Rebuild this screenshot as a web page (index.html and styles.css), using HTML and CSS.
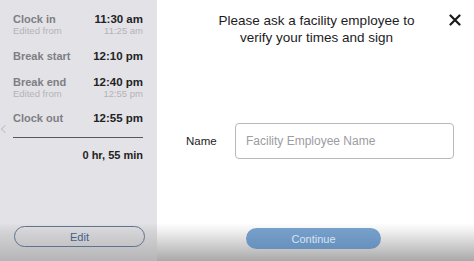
FILE: index.html
```html
<!DOCTYPE html>
<html>
<head>
<meta charset="utf-8">
<link rel="stylesheet" href="styles.css">
</head>
<body>
<div class="app">
  <aside class="side">
    <div class="side-body">
      <div class="entry">
        <div class="row"><span class="label">Clock in</span><span class="time">11:30 am</span></div>
        <div class="row sub"><span>Edited from</span><span>11:25 am</span></div>
      </div>
      <div class="entry">
        <div class="row"><span class="label">Break start</span><span class="time">12:10 pm</span></div>
      </div>
      <div class="entry">
        <div class="row"><span class="label">Break end</span><span class="time">12:40 pm</span></div>
        <div class="row sub"><span>Edited from</span><span>12:55 pm</span></div>
      </div>
      <div class="entry">
        <div class="row"><span class="label">Clock out</span><span class="time">12:55 pm</span></div>
      </div>
      <div class="rule"></div>
      <div class="total">0 hr, 55 min</div>
      <span class="chev"></span>
    </div>
    <div class="foot">
      <button class="edit">Edit</button>
    </div>
  </aside>
  <main class="main">
    <div class="main-body">
      <header class="head">
        <h1 class="title">Please ask a facility employee to<br>verify your times and sign</h1>
        <span class="close">
          <svg width="12" height="12" viewBox="0 0 12 12"><path d="M1.5 1.5L10.5 10.5M10.5 1.5L1.5 10.5" stroke="#1a1a1a" stroke-width="2.2" stroke-linecap="round"/></svg>
        </span>
      </header>
      <div class="field">
        <label class="name-label">Name</label>
        <div class="input">Facility Employee Name</div>
      </div>
    </div>
    <div class="foot foot-main">
      <button class="continue">Continue</button>
    </div>
  </main>
</div>
</body>
</html>
```
FILE: styles.css
```css
* { box-sizing: border-box; }
html, body { margin: 0; padding: 0; }
body {
  width: 474px;
  height: 261px;
  overflow: hidden;
  font-family: "Liberation Sans", Arial, sans-serif;
  background: #fff;
}
.app {
  display: grid;
  grid-template-columns: 157px 1fr;
  height: 261px;
}
.side {
  background: #e3e2e6;
  display: flex;
  flex-direction: column;
}
.side-body {
  flex: 1;
  padding: 12px 14px 0 13px;
  position: relative;
}
.entry + .entry {
  margin-top: 12px;
}
.entry:nth-child(2) { margin-top: 13px; }
.row {
  display: flex;
  justify-content: space-between;
  align-items: baseline;
  line-height: 14px;
}
.label {
  font-size: 11px;
  font-weight: bold;
  color: #7f7e84;
}
.time {
  font-size: 11.5px;
  font-weight: bold;
  color: #222224;
}
.sub {
  font-size: 9.5px;
  color: #b4b3b8;
  line-height: 11px;
  margin-top: -1px;
}
.rule {
  height: 1px;
  background: #58575c;
  margin-top: 12px;
}
.total {
  text-align: right;
  font-size: 11px;
  font-weight: bold;
  line-height: 14px;
  color: #1f1f21;
  margin-top: 10px;
}
.chev {
  position: absolute;
  left: 2px;
  top: 126px;
  width: 6px;
  height: 6px;
  border-left: 1px solid #c4c3c8;
  border-bottom: 1px solid #c4c3c8;
  transform: rotate(45deg);
}
.foot {
  height: 38px;
  display: flex;
  align-items: flex-start;
  background: linear-gradient(#e3e2e6 0px, #d4d3d6 8px, #b5b4b7 100%);
  padding-top: 3px;
}
.foot-main {
  background: linear-gradient(#ffffff 0px, #f0f0f0 8px, #a9a9a9 100%);
  justify-content: center;
  padding-top: 5px;
  padding-right: 4px;
}
.edit {
  margin-left: 14px;
  width: 131px;
  height: 21px;
  border: 1px solid #5d7391;
  border-radius: 11px;
  background: transparent;
  color: #3f5f8e;
  font-family: inherit;
  font-size: 11px;
  padding: 0;
}
.continue {
  width: 135px;
  height: 21px;
  border: none;
  border-radius: 11px;
  background: linear-gradient(#77a0cb, #6790bd);
  color: #d6e4f2;
  font-family: inherit;
  font-size: 11px;
  padding: 0;
}
.main {
  display: flex;
  flex-direction: column;
}
.main-body {
  flex: 1;
}
.head {
  position: relative;
  padding-top: 12px;
}
.title {
  margin: 0;
  text-align: center;
  font-size: 13.5px;
  font-weight: normal;
  line-height: 17px;
  color: #1c1c1e;
  padding-left: 2px;
}
.close {
  position: absolute;
  right: 13px;
  top: 14px;
  width: 12px;
  height: 12px;
  display: flex;
}
.field {
  display: flex;
  align-items: center;
  margin-top: 77px;
  padding-left: 29px;
}
.name-label {
  font-size: 11.5px;
  color: #1c1c1e;
  width: 49px;
}
.input {
  width: 219px;
  height: 36px;
  border: 1px solid #b9b9bc;
  border-radius: 4px;
  padding-left: 10px;
  display: flex;
  align-items: center;
  font-size: 12px;
  color: #9c9ca1;
}
```
